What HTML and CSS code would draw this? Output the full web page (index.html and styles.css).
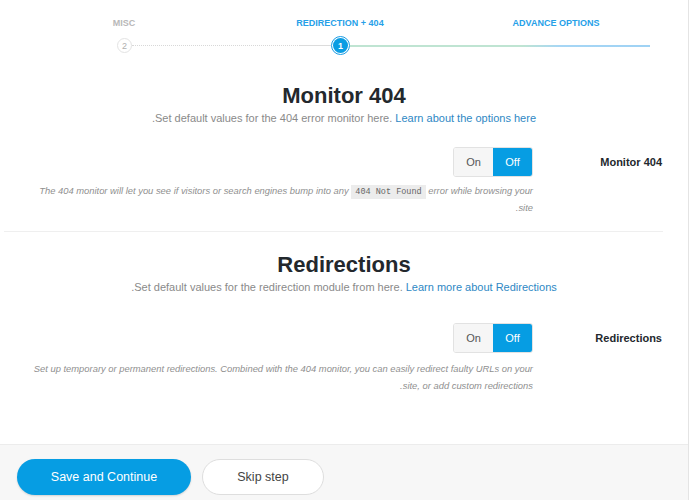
FILE: index.html
```html
<!DOCTYPE html>
<html dir="rtl" lang="en">
<head>
<meta charset="utf-8">
<title>Setup wizard - Redirection + 404</title>
<link rel="stylesheet" href="styles.css">
</head>
<body>
<div class="card">
  <div class="content">
    <div class="steps">
      <div class="step step-done">MISC</div>
      <div class="step step-active">REDIRECTION + 404</div>
      <div class="step step-next">ADVANCE OPTIONS</div>
    </div>
    <div class="track">
      <span class="track-lead"></span>
      <span class="dot dot-grey">2</span>
      <span class="seg seg-dotted"></span>
      <span class="seg seg-grey"></span>
      <span class="dot dot-blue"><span class="dot-inner">1</span></span>
      <span class="seg seg-green"></span>
      <span class="seg seg-blue"></span>
    </div>

    <section class="group">
      <h2 class="title">Monitor 404</h2>
      <p class="sub">Set default values for the 404 error monitor here. <a href="#">Learn about the options here</a>.</p>
      <div class="row row-first">
        <div class="label">Monitor 404</div>
        <div class="field">
          <div class="toggle"><span class="opt">On</span><span class="opt opt-sel">Off</span></div>
          <p class="desc">The 404 monitor will let you see if visitors or search engines bump into any <code>404 Not Found</code> error while browsing your site.</p>
        </div>
      </div>
    </section>

    <div class="sep"></div>

    <section class="group group-after-sep">
      <h2 class="title">Redirections</h2>
      <p class="sub">Set default values for the redirection module from here. <a href="#">Learn more about Redirections</a>.</p>
      <div class="row row-second">
        <div class="label">Redirections</div>
        <div class="field">
          <div class="toggle"><span class="opt">On</span><span class="opt opt-sel">Off</span></div>
          <p class="desc">Set up temporary or permanent redirections. Combined with the 404 monitor, you can easily redirect faulty URLs on your site, or add custom redirections.</p>
        </div>
      </div>
    </section>
  </div>
  <div class="footer">
    <button class="btn btn-primary" type="button">Save and Continue</button>
    <button class="btn btn-plain" type="button">Skip step</button>
  </div>
</div>
</body>
</html>
```

FILE: styles.css
```css
html, body {
  margin: 0;
  padding: 0;
  background: #ffffff;
}
body {
  font-family: "Liberation Sans", Arial, sans-serif;
  color: #555;
  font-size: 11px;
}
.card {
  width: 688px;
  margin: 0 auto 0 0;
  border-right: 1px solid #e4e4e4;
  background: #fff;
  min-height: 500px;
  display: flex;
  flex-direction: column;
}
.content {
  padding: 17px 0 50px;
}
.steps {
  direction: ltr;
  display: grid;
  grid-template-columns: 216px 216px 216px;
  margin: 0 16px;
}
.step {
  text-align: center;
  font-size: 9px;
  font-weight: bold;
  line-height: 12px;
  color: #26a0e8;
}
.step-done {
  color: #b8b8b8;
}
.track {
  direction: ltr;
  display: flex;
  align-items: center;
  height: 19px;
  margin-top: 7px;
}
.track-lead {
  width: 117px;
}
.dot {
  box-sizing: border-box;
  display: flex;
  align-items: center;
  justify-content: center;
  border-radius: 50%;
  flex: none;
}
.dot-grey {
  width: 15px;
  height: 15px;
  border: 1px solid #e3e3e3;
  color: #b0b0b0;
  font-size: 9px;
  background: #fff;
}
.dot-blue {
  width: 19px;
  height: 19px;
  border: 1px solid #1a9ce4;
  padding: 1px;
  background: #fff;
}
.dot-inner {
  width: 15px;
  height: 15px;
  border-radius: 50%;
  background: #0a9de3;
  color: #fff;
  font-size: 9px;
  font-weight: bold;
  display: flex;
  align-items: center;
  justify-content: center;
}
.seg {
  height: 1px;
  flex: none;
}
.seg-dotted {
  width: 168px;
  border-top: 1px dotted #d8d8d8;
  height: 0;
}
.seg-grey {
  width: 31px;
  background: #dcdcdc;
}
.seg-green {
  width: 172px;
  height: 2px;
  background: #bfe4d2;
}
.seg-blue {
  width: 128px;
  height: 2px;
  background: linear-gradient(to right, #bfe4d2, #a6d6f5 30%, #9fd2f4);
}

.group {
  text-align: center;
}
.title {
  margin: 28px 0 0;
  font-size: 22px;
  line-height: 26px;
  font-weight: bold;
  color: #23282d;
}
.group-after-sep .title {
  margin-top: 20px;
}
.sub {
  margin: 1px 0 0;
  font-size: 11px;
  line-height: 16px;
  color: #8a8a8a;
}
.sub a {
  color: #2e88c4;
  text-decoration: none;
}
.row {
  display: flex;
  padding: 0 26px 0 24px;
  gap: 29px;
  text-align: right;
}
.row-first {
  margin-top: 21px;
}
.row-second {
  margin-top: 28px;
}
.label {
  width: 100px;
  flex: none;
  font-weight: bold;
  font-size: 11px;
  color: #23282d;
  line-height: 30px;
}
.field {
  flex: 1;
}
.toggle {
  direction: ltr;
  display: inline-flex;
  height: 30px;
  border: 1px solid #e2e2e2;
  border-radius: 3px;
  box-sizing: border-box;
  overflow: hidden;
  vertical-align: top;
}
.opt {
  width: 39px;
  display: flex;
  align-items: center;
  justify-content: center;
  font-size: 11px;
  color: #555;
  background: #f6f6f6;
}
.opt-sel {
  background: #069de3;
  color: #fff;
}
.desc {
  margin: 5px 0 0;
  font-style: italic;
  font-size: 9.4px;
  line-height: 17px;
  color: #8f8f8f;
}
.row-second .desc {
  margin-top: 7px;
}
.desc code {
  font-family: "Liberation Mono", "DejaVu Sans Mono", monospace;
  font-style: normal;
  font-size: 8.5px;
  line-height: 10px;
  background: #ececec;
  color: #666;
  padding: 2px 4px;
}
.sep {
  margin: 15px 25px 0 4px;
  height: 1px;
  background: #efefef;
}
.footer {
  direction: ltr;
  flex: 1;
  display: flex;
  gap: 11px;
  padding: 14px 17px;
  background: #f7f7f7;
  border-top: 1px solid #ececec;
}
.btn {
  height: 36px;
  border-radius: 18px;
  font-family: "Liberation Sans", Arial, sans-serif;
  font-size: 12.5px;
  cursor: pointer;
}
.btn-primary {
  width: 174px;
  background: #069de3;
  color: #fff;
  border: 0;
  box-shadow: 0 1px 2px rgba(0,0,0,0.15);
}
.btn-plain {
  width: 122px;
  background: #fff;
  color: #444;
  border: 1px solid #dedede;
}
```
